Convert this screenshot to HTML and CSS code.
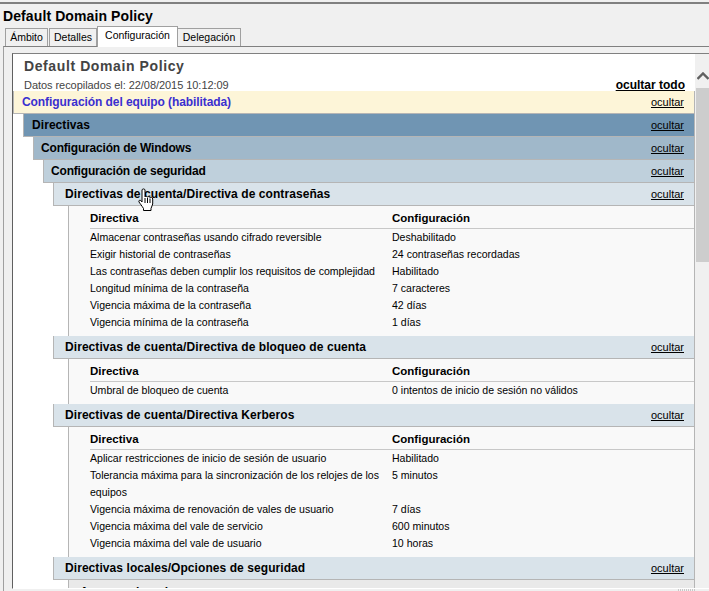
FILE: index.html
```html
<!DOCTYPE html>
<html>
<head lang="es">
    <meta charset="UTF-8">
    <title>Default Domain Policy</title>
    <link rel="stylesheet" href="styles.css">
</head>
<body>
  <div id="window">
      <div class="top-line"></div>
      <h1 class="gpo-title">Default Domain Policy</h1>
      <ul id="tabs">
          <li>Ámbito</li>
          <li>Detalles</li>
          <li class="selected">Configuración</li>
          <li>Delegación</li>
      </ul>
      <div id="panel">
          <div id="frame">
              <div id="report">
                  <div class="report-head">
                      <h2>Default Domain Policy</h2>
                      <div class="collected">
                          <span>Datos recopilados el: 22/08/2015 10:12:09</span>
                          <a href="#" class="hide-all">ocultar todo</a>
                      </div>
                  </div>
                  <div class="report-body">
                      <div class="bar bar-computer"><span>Configuración del equipo (habilitada)</span><a href="#">ocultar</a></div>
                      <div class="level">
                          <div class="bar bar-1"><span>Directivas</span><a href="#">ocultar</a></div>
                          <div class="level">
                              <div class="bar bar-2"><span>Configuración de Windows</span><a href="#">ocultar</a></div>
                              <div class="level">
                                  <div class="bar bar-3"><span>Configuración de seguridad</span><a href="#">ocultar</a></div>
                                  <div class="level">
                                      <div class="bar bar-4"><span>Directivas de cuenta/Directiva de contraseñas</span><a href="#">ocultar</a></div>
                                      <div class="settings">
                                          <table>
                                              <tr><th>Directiva</th><th>Configuración</th></tr>
                                              <tr><td>Almacenar contraseñas usando cifrado reversible</td><td>Deshabilitado</td></tr>
                                              <tr><td>Exigir historial de contraseñas</td><td>24 contraseñas recordadas</td></tr>
                                              <tr><td>Las contraseñas deben cumplir los requisitos de complejidad</td><td>Habilitado</td></tr>
                                              <tr><td>Longitud mínima de la contraseña</td><td>7 caracteres</td></tr>
                                              <tr><td>Vigencia máxima de la contraseña</td><td>42 días</td></tr>
                                              <tr><td>Vigencia mínima de la contraseña</td><td>1 días</td></tr>
                                          </table>
                                      </div>
                                      <div class="bar bar-4"><span>Directivas de cuenta/Directiva de bloqueo de cuenta</span><a href="#">ocultar</a></div>
                                      <div class="settings">
                                          <table>
                                              <tr><th>Directiva</th><th>Configuración</th></tr>
                                              <tr><td>Umbral de bloqueo de cuenta</td><td>0 intentos de inicio de sesión no válidos</td></tr>
                                          </table>
                                      </div>
                                      <div class="bar bar-4"><span>Directivas de cuenta/Directiva Kerberos</span><a href="#">ocultar</a></div>
                                      <div class="settings">
                                          <table>
                                              <tr><th>Directiva</th><th>Configuración</th></tr>
                                              <tr><td>Aplicar restricciones de inicio de sesión de usuario</td><td>Habilitado</td></tr>
                                              <tr><td>Tolerancia máxima para la sincronización de los relojes de los equipos</td><td>5 minutos</td></tr>
                                              <tr><td>Vigencia máxima de renovación de vales de usuario</td><td>7 días</td></tr>
                                              <tr><td>Vigencia máxima del vale de servicio</td><td>600 minutos</td></tr>
                                              <tr><td>Vigencia máxima del vale de usuario</td><td>10 horas</td></tr>
                                          </table>
                                      </div>
                                      <div class="bar bar-4"><span>Directivas locales/Opciones de seguridad</span><a href="#">ocultar</a></div>
                                      <div class="settings settings-cut">
                                          <div class="bar-5"><span>Acceso a la red</span><a href="#">ocultar</a></div>
                                      </div>
                                  </div>
                              </div>
                          </div>
                      </div>
                  </div>
              </div>
              <div id="scrollbar">
                  <svg class="arrow" width="12" height="8" viewBox="0 0 12 8"><path d="M.5 7 L6 1.5 L11.5 7" fill="none" stroke="#606060" stroke-width="2.4"/></svg>
                  <div class="thumb"></div>
              </div>
          </div>
      </div>
      <div class="grip"></div>
      <svg id="cursor" width="16" height="23" viewBox="0 0 16 23">
          <path d="M4 2 C4 .6 7 .6 7 2 V9 C7.6 8 9 8 9.5 9.2 C10 8.2 11.5 8.4 12 9.6 C12.6 9 14.6 9.2 14.7 11 V16 L13 20.5 V22.5 H5.5 V20.5 C4 18 2 15.5 1 14 C.3 12.6 1.8 11.6 2.8 12.5 L4 14 Z" fill="#fff" stroke="#000" stroke-width="1"/>
          <path d="M7 10 V15 M9.5 10 V15 M12 10.5 V15" fill="none" stroke="#000" stroke-width="1"/>
      </svg>
  </div>
</body>
</html>
```

FILE: styles.css
```css
*{
    margin: 0;
    padding: 0;
    box-sizing: border-box;
}
html,body{
    height: 100%;
    overflow: hidden;
}
body{
    background: #f0f0f0;
    font-family: "Liberation Sans", Arial, sans-serif;
    font-size: 10.55px;
    color: #000;
}
a{
    color: #000;
    text-decoration: underline;
}
ul{
    list-style: none;
}
#window{
    position: relative;
    width: 709px;
    height: 591px;
    padding-top: 2px;
    overflow: hidden;
    display: flex;
    flex-direction: column;
}
.top-line{
    flex: none;
    height: 2px;
    margin-bottom: 4px;
    background: #808080;
}
.gpo-title{
    font-size: 14px;
    line-height: 16px;
    margin-left: 3px;
    letter-spacing: .1px;
}
#tabs{
    display: flex;
    align-items: flex-end;
    flex: none;
    height: 20px;
    margin: 2px 0 0 5px;
    position: relative;
    z-index: 1;
    font-size: 10.5px;
}
#tabs li{
    height: 18px;
    line-height: 17px;
    margin-right: 1px;
    border: 1px solid #a0a0a0;
    border-bottom: 0;
    background: #f0f0f0;
    text-align: center;
}
#tabs li:nth-child(1){ width: 43px; }
#tabs li:nth-child(2){ width: 48px; }
#tabs li:nth-child(4){ width: 64px; margin-right: 0; }
#tabs .selected{
    width: 81px;
    height: 21px;
    margin: 0 -1px 0 -1px;
    background: #fff;
    position: relative;
    top: 1px;
}
#panel{
    flex: 1;
    min-height: 0;
    margin-left: 3px;
    padding: 6px 0 2px 8px;
    border-top: 1px solid #808080;
    border-left: 1px solid #a0a0a0;
    display: flex;
}
#frame{
    flex: 1;
    min-width: 0;
    display: flex;
    background: #fff;
    border-top: 1px solid #808080;
    border-left: 1px solid #606060;
    border-bottom: 1px solid #fff;
}
#report{
    flex: 1;
    min-width: 0;
    overflow: hidden;
}
.report-head{
    height: 37px;
    padding: 4px 10px 0 11px;
    color: #444;
}
.report-head h2{
    font-size: 14px;
    line-height: 17px;
    letter-spacing: .6px;
}
.collected{
    display: flex;
    justify-content: space-between;
    margin-top: 3px;
    font-size: 11px;
    line-height: 14px;
    letter-spacing: -.05px;
}
.hide-all{
    font-size: 12px;
    font-weight: bold;
    letter-spacing: 0;
}
.report-body{
    border-right: 1px solid #b5b5b5;
}
.bar{
    display: flex;
    justify-content: space-between;
    height: 23px;
    line-height: 22px;
    padding-right: 10px;
    border: 1px solid #b5b5b5;
    border-width: 0 0 1px 1px;
    font-size: 11px;
}
.bar span{
    font-size: 12px;
    font-weight: bold;
    letter-spacing: .07px;
}
.bar-computer{
    background: #fdf5d8;
    padding-left: 8px;
}
.bar-computer span{
    color: #3a2fd0;
    letter-spacing: -.08px;
}
.bar-1{
    background: #7095b3;
    padding-left: 8px;
}
.bar-2{
    background: #a0b8ca;
    padding-left: 7px;
}
.bar-3{
    background: #bfd0dc;
    padding-left: 7px;
}
.bar-2 span,.bar-3 span{
    letter-spacing: -.18px;
}
.bar-4{
    background: #d9e3ea;
    padding-left: 11px;
}
.level{
    margin-left: 10px;
}
.settings{
    margin-left: 15px;
    padding: 2px 0 5px 21px;
    background: #f9f9f9;
    border-left: 1px solid #b5b5b5;
}
.settings table{
    border-collapse: separate;
    border-spacing: 0;
    width: 100%;
    table-layout: fixed;
}
.settings th{
    font-size: 11.5px;
    font-weight: bold;
    text-align: left;
    height: 21px;
    padding: 1px 0 2px;
    border-bottom: 1px solid #c8c8c8;
}
.settings th:first-child,.settings td:first-child{
    width: 302px;
    padding-right: 10px;
}
.settings td{
    line-height: 17px;
    vertical-align: top;
}
.settings-cut{
    background: #e9e9e9;
    padding: 4px 0 0 11px;
    height: 30px;
}
.bar-5{
    display: flex;
    justify-content: space-between;
    padding-right: 10px;
    font-size: 12px;
    font-weight: bold;
    line-height: 16px;
}
.bar-5 a{
    font-size: 11px;
    font-weight: normal;
}
#scrollbar{
    width: 14px;
    flex: none;
    background: #f0f0f0;
    display: flex;
    flex-direction: column;
    align-items: flex-end;
    padding-top: 18px;
}
.arrow{
    display: block;
}
.thumb{
    width: 13px;
    height: 174px;
    margin-top: 8px;
    background: #cdcdcd;
}
.grip{
    position: absolute;
    left: 678px;
    bottom: 0;
    width: 17px;
    height: 2px;
    background: repeating-linear-gradient(90deg, #c8c8c8 0 1px, #f4f4f4 1px 2px);
}
#cursor{
    position: absolute;
    left: 138px;
    top: 188px;
}
```
